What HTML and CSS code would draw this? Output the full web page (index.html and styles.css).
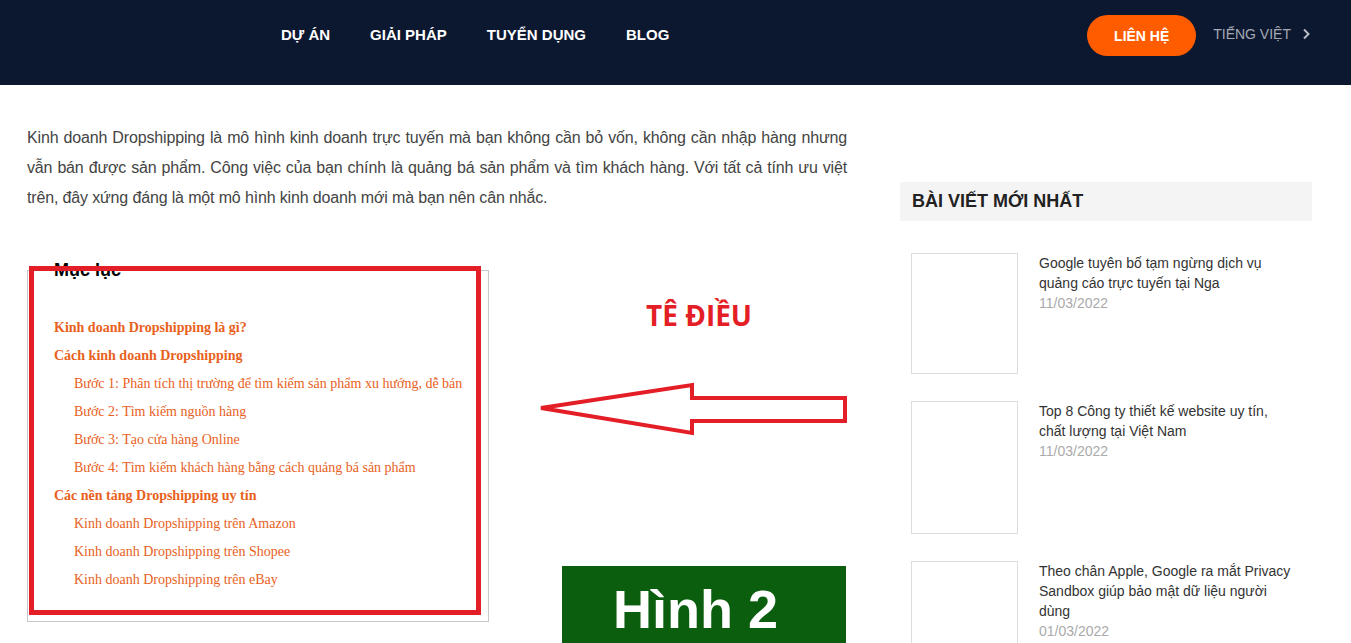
FILE: index.html
```html
<!DOCTYPE html>
<html lang="vi">
<head>
<meta charset="utf-8">
<title>Kinh doanh Dropshipping</title>
<link rel="stylesheet" href="styles.css">
</head>
<body>
<header class="site-header">
  <nav class="main-nav">
    <a class="nav-link" href="#">DỰ ÁN</a>
    <a class="nav-link" href="#">GIẢI PHÁP</a>
    <a class="nav-link" href="#">TUYỂN DỤNG</a>
    <a class="nav-link" href="#">BLOG</a>
  </nav>
  <div class="header-right">
    <a class="btn-contact" href="#">LIÊN HỆ</a>
    <a class="lang" href="#">TIẾNG VIỆT
      <svg class="chev" width="8" height="12" viewBox="0 0 8 12"><path d="M2 1.5 L6.5 6 L2 10.5" fill="none" stroke="#b8bcc4" stroke-width="2"/></svg>
    </a>
  </div>
</header>

<div class="page">
  <main class="article">
    <p class="intro">Kinh doanh Dropshipping là mô hình kinh doanh trực tuyến mà bạn không cần bỏ vốn, không cần nhập hàng nhưng vẫn bán được sản phẩm. Công việc của bạn chính là quảng bá sản phẩm và tìm khách hàng. Với tất cả tính ưu việt trên, đây xứng đáng là một mô hình kinh doanh mới mà bạn nên cân nhắc.</p>

    <div class="toc">
      <div class="toc-title">Mục lục</div>
      <ul class="toc-list">
        <li class="toc-h2"><a href="#">Kinh doanh Dropshipping là gì?</a></li>
        <li class="toc-h2"><a href="#">Cách kinh doanh Dropshipping</a></li>
        <li class="toc-h3"><a href="#">Bước 1: Phân tích thị trường để tìm kiếm sản phẩm xu hướng, dễ bán</a></li>
        <li class="toc-h3"><a href="#">Bước 2: Tìm kiếm nguồn hàng</a></li>
        <li class="toc-h3"><a href="#">Bước 3: Tạo cửa hàng Online</a></li>
        <li class="toc-h3"><a href="#">Bước 4: Tìm kiếm khách hàng bằng cách quảng bá sản phẩm</a></li>
        <li class="toc-h2"><a href="#">Các nền tảng Dropshipping uy tín</a></li>
        <li class="toc-h3"><a href="#">Kinh doanh Dropshipping trên Amazon</a></li>
        <li class="toc-h3"><a href="#">Kinh doanh Dropshipping trên Shopee</a></li>
        <li class="toc-h3"><a href="#">Kinh doanh Dropshipping trên eBay</a></li>
      </ul>
    </div>
  </main>

  <aside class="sidebar">
    <h3 class="widget-title">BÀI VIẾT MỚI NHẤT</h3>
    <ul class="posts">
      <li class="post">
        <div class="thumb thumb-a"></div>
        <div class="post-body">
          <a class="post-title" href="#">Google tuyên bố tạm ngừng dịch vụ quảng cáo trực tuyến tại Nga</a>
          <div class="post-date">11/03/2022</div>
        </div>
      </li>
      <li class="post">
        <div class="thumb thumb-b"></div>
        <div class="post-body">
          <a class="post-title" href="#">Top 8 Công ty thiết kế website uy tín, chất lượng tại Việt Nam</a>
          <div class="post-date">11/03/2022</div>
        </div>
      </li>
      <li class="post">
        <div class="thumb thumb-b"></div>
        <div class="post-body">
          <a class="post-title" href="#">Theo chân Apple, Google ra mắt Privacy Sandbox giúp bảo mật dữ liệu người dùng</a>
          <div class="post-date">01/03/2022</div>
        </div>
      </li>
    </ul>
  </aside>
</div>

<svg class="annot" width="1351" height="643" viewBox="0 0 1351 643">
  <rect x="31.5" y="268.5" width="447" height="344" fill="none" stroke="#e41e26" stroke-width="5"/>
  <polygon points="541,408 692,385 692,398 845,398 845,421 692,421 692,433" fill="none" stroke="#e41e26" stroke-width="4" stroke-linejoin="miter"/>
  <text class="annot-label" x="646" y="326">TÊ ĐIỀU</text>
  <rect x="562" y="566" width="284" height="90" fill="#0a5e0d"/>
  <text class="annot-fig" x="613" y="628">Hình 2</text>
</svg>
</body>
</html>
```

FILE: styles.css
```css
html, body {
  margin: 0;
  padding: 0;
  overflow: hidden;
  background: #fff;
}
body {
  font-family: "Liberation Sans", Arial, sans-serif;
  color: #444;
  position: relative;
  width: 1351px;
  height: 643px;
}
a { text-decoration: none; color: inherit; }
ul { list-style: none; margin: 0; padding: 0; }

/* Header */
.site-header {
  height: 85px;
  box-sizing: border-box;
  background: #0c1730;
  display: flex;
  align-items: flex-start;
  padding: 15px 41px 0 281px;
}
.main-nav {
  display: flex;
  gap: 40px;
  height: 38px;
  align-items: center;
}
.nav-link {
  color: #fff;
  font-weight: bold;
  font-size: 15px;
}
.header-right {
  margin-left: auto;
  display: flex;
  align-items: center;
  height: 41px;
}
.btn-contact {
  display: flex;
  align-items: center;
  justify-content: center;
  width: 109px;
  height: 41px;
  border-radius: 21px;
  background: #ff5c00;
  color: #fff;
  font-weight: bold;
  font-size: 14px;
  padding-top: 1px;
  box-sizing: border-box;
}
.lang {
  margin-left: 17px;
  color: #a4a9b3;
  font-size: 14px;
  display: flex;
  align-items: center;
  gap: 11px;
  margin-top: -3px;
}

/* Page */
.page {
  display: grid;
  grid-template-columns: 820px 412px;
  column-gap: 53px;
  padding-left: 27px;
  align-items: start;
}
.intro {
  margin: 0;
  padding-top: 38px;
  font-size: 16px;
  line-height: 30px;
  color: #444;
  text-align: justify;
  letter-spacing: -0.15px;
}

.toc {
  margin-top: 57px;
  width: 462px;
  height: 352px;
  box-sizing: border-box;
  border: 1px solid #c8c8c8;
  padding: 0 0 0 26px;
}
.toc-title {
  margin-top: -12px;
  font-size: 18px;
  font-weight: bold;
  line-height: 22px;
  color: #000;
}
.toc-list {
  margin-top: 33px;
  font-family: "Liberation Serif", "Times New Roman", serif;
  font-size: 14px;
  line-height: 28px;
  color: #e8611c;
}
.toc-h2 { font-weight: bold; }
.toc-h3 { padding-left: 20px; }

/* Sidebar */
.sidebar {
  margin-top: 97px;
}
.widget-title {
  margin: 0;
  height: 39px;
  display: flex;
  align-items: center;
  padding-left: 12px;
  background: #f4f4f4;
  font-size: 18px;
  font-weight: bold;
  color: #222;
}
.posts {
  padding: 32px 0 0 11px;
}
.post {
  display: flex;
  gap: 21px;
  margin-bottom: 27px;
}
.thumb {
  width: 107px;
  flex: none;
  box-sizing: border-box;
  border: 1px solid #ddd;
  background: #fff;
}
.thumb-a { height: 121px; }
.thumb-b { height: 133px; }
.post-body {
  width: 254px;
  font-size: 14px;
  line-height: 20px;
}
.post-title { color: #333; }
.post-date { color: #aaa; }

/* Annotation overlay */
.annot {
  position: absolute;
  left: 0;
  top: 0;
  pointer-events: none;
}
.annot-label {
  font-family: "Open Sans", sans-serif;
  font-weight: bold;
  font-size: 28px;
  fill: #e41e26;
}
.annot-fig {
  font-family: "Liberation Sans", Arial, sans-serif;
  font-weight: bold;
  font-size: 54px;
  fill: #fff;
}
```
